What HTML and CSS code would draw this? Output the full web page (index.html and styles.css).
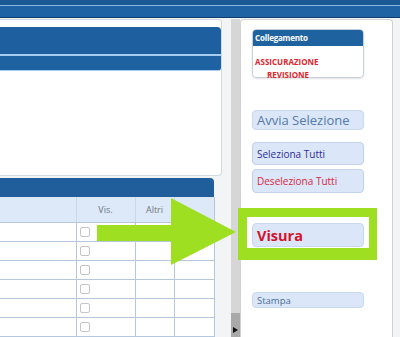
FILE: index.html
```html
<!DOCTYPE html>
<html lang="it">
<head>
    <meta charset="UTF-8">
    <meta name="viewport" content="width=device-width, initial-scale=1.0">
    <title>Visura</title>
    <link rel="stylesheet" href="styles.css">
</head>
<body>
    <div class="topbar"></div>
    <div class="main">
        <div class="left-col">
            <!-- Filtri -->
            <section class="filter-panel">
                <div class="panel-head"></div>
                <div class="panel-subhead"></div>
            </section>

            <!-- Elenco -->
            <section class="grid-panel">
                <div class="grid-head"></div>
                <table class="grid">
                    <colgroup>
                        <col class="c-main">
                        <col class="c-vis">
                        <col class="c-altri">
                        <col class="c-last">
                    </colgroup>
                    <thead>
                        <tr><th></th><th>Vis.</th><th>Altri</th><th></th></tr>
                    </thead>
                    <tbody>
                        <tr><td></td><td><span class="check"></span></td><td></td><td></td></tr>
                        <tr><td></td><td><span class="check"></span></td><td></td><td></td></tr>
                        <tr><td></td><td><span class="check"></span></td><td></td><td></td></tr>
                        <tr><td></td><td><span class="check"></span></td><td></td><td></td></tr>
                        <tr><td></td><td><span class="check"></span></td><td></td><td></td></tr>
                        <tr><td></td><td><span class="check"></span></td><td></td><td></td></tr>
                    </tbody>
                </table>
            </section>
        </div>

        <div class="splitter">
            <div class="splitter-thumb"><span class="splitter-arrow"></span></div>
        </div>

        <!-- Azioni -->
        <aside class="side-panel">
            <div class="link-box">
                <div class="link-title">Collegamento</div>
                <div class="link-list">
                    <div class="link-item">ASSICURAZIONE</div>
                    <div class="link-item indent">REVISIONE</div>
                </div>
            </div>
            <button class="btn btn-big">Avvia Selezione</button>
            <button class="btn btn-select">Seleziona Tutti</button>
            <button class="btn btn-deselect">Deseleziona Tutti</button>
            <button class="btn btn-visura">Visura</button>
            <button class="btn btn-small">Stampa</button>
        </aside>
    </div>

    <!-- annotation -->
    <div class="highlight"></div>
    <svg class="arrow" width="400" height="337" viewBox="0 0 400 337">
        <polygon points="97,225 171,225 171,198 236,232 171,265 171,241 97,241" fill="#9fdf22"/>
    </svg>
</body>
</html>
```

FILE: styles.css
```css
* {
    box-sizing: border-box;
}
body {
    margin: 0;
    width: 400px;
    height: 337px;
    overflow: hidden;
    position: relative;
    background-color: #f3f4f5;
    font-family: "Open Sans", "DejaVu Sans", sans-serif;
}
.topbar {
    height: 18px;
    background: linear-gradient(#1b5894 0 5px, #8ab6df 5px 6px, #2063a4 6px);
    border-bottom: 1px solid #113f6d;
}
.main {
    display: flex;
    height: 319px;
    padding-top: 1px;
}
.left-col {
    width: 222px;
    display: flex;
    flex-direction: column;
}
.filter-panel {
    height: 167px;
    padding-top: 7px;
    background-color: #fff;
    border: 1px solid #d3d9e0;
    border-left: none;
    border-radius: 0 4px 4px 0;
}
.panel-head {
    height: 29px;
    background-color: #1e5f9f;
    border-bottom: 2px solid #a6cbee;
    border-radius: 0 4px 0 0;
}
.panel-subhead {
    height: 15px;
    background-color: #1f62a2;
    border-bottom: 1px solid #a6cbee;
    border-radius: 0 0 3px 0;
}
.grid-panel {
    flex: 1;
    width: 214px;
    margin-top: 2px;
    background-color: #fff;
}
.grid-head {
    height: 19px;
    background-color: #1f5e9a;
    border-radius: 0 4px 0 0;
}
.grid {
    width: 214px;
    table-layout: fixed;
    border-collapse: collapse;
}
.c-main { width: 76px; }
.c-vis { width: 59px; }
.c-altri { width: 39px; }
.c-last { width: 40px; }
.grid th {
    height: 26px;
    padding: 0;
    background-color: #dde9f8;
    border-left: 1px solid #c9d7e8;
    border-bottom: 1px solid #b5c7dc;
    font-size: 9px;
    font-weight: normal;
    color: #6f7680;
    text-align: center;
}
.grid td {
    height: 19px;
    padding: 0 0 0 3px;
    border-left: 1px solid #b5c7dc;
    border-bottom: 1px solid #b5c7dc;
    vertical-align: middle;
}
.grid th:first-child, .grid td:first-child {
    border-left: none;
}
.grid th:last-child, .grid td:last-child {
    border-right: 1px solid #b5c7dc;
}
.check {
    display: block;
    width: 10px;
    height: 10px;
    background-color: #fff;
    border: 1px solid #c4c4c4;
    border-radius: 2px;
}
.splitter {
    width: 9px;
    margin-left: 9px;
    display: flex;
    flex-direction: column;
    justify-content: flex-end;
    background-color: #d6d6d6;
}
.splitter-thumb {
    height: 24px;
    background-color: #a9a9a9;
    position: relative;
}
.splitter-arrow {
    position: absolute;
    left: 2px;
    bottom: 4px;
    border-left: 5px solid #111;
    border-top: 3px solid transparent;
    border-bottom: 3px solid transparent;
}
.side-panel {
    width: 153px;
    display: flex;
    flex-direction: column;
    align-items: flex-start;
    padding: 9px 0 0 11px;
    background-color: #fff;
    border: 1px solid #d2d2d2;
    border-bottom: none;
    border-radius: 4px 4px 0 0;
}
.link-box {
    width: 112px;
    height: 49px;
    border: 1px solid #c6d0dc;
    border-radius: 4px;
    box-shadow: 0 1px 2px rgba(0, 0, 0, 0.12);
}
.link-title {
    height: 16px;
    padding-left: 2px;
    background-color: #1f62a0;
    border-radius: 3px 3px 0 0;
    color: #fff;
    font-size: 8px;
    font-weight: bold;
    letter-spacing: -0.2px;
    line-height: 15px;
}
.link-list {
    padding-top: 9px;
}
.link-item {
    padding-left: 2px;
    color: #e0242e;
    font-size: 8px;
    font-weight: bold;
    line-height: 13px;
}
.link-item.indent {
    padding-left: 14px;
}
.btn {
    width: 112px;
    padding: 0 0 0 4px;
    text-align: left;
    background-color: #dbe7f8;
    border: 1px solid #c8d8ee;
    border-radius: 4px;
    font-family: "Open Sans", "DejaVu Sans", sans-serif;
    cursor: pointer;
}
.btn-big {
    height: 20px;
    margin-top: 32px;
    font-size: 13px;
    color: #5579a8;
}
.btn-select {
    height: 23px;
    margin-top: 12px;
    font-size: 10px;
    color: #2c2d9c;
    border-color: #c2d2ea;
}
.btn-deselect {
    height: 24px;
    margin-top: 4px;
    font-size: 10px;
    color: #d8263e;
    border-color: #c2d2ea;
}
.btn-visura {
    height: 24px;
    margin-top: 30px;
    font-size: 14.5px;
    font-weight: bold;
    color: #d3122c;
}
.btn-small {
    height: 16px;
    margin-top: 45px;
    font-size: 9.5px;
    color: #4b6c9c;
}
.highlight {
    position: absolute;
    left: 238px;
    top: 208px;
    width: 139px;
    height: 52px;
    border: 9px solid #9fdf22;
    border-width: 9px 8px 12px 9px;
}
.arrow {
    position: absolute;
    left: 0;
    top: 0;
    pointer-events: none;
}
```
